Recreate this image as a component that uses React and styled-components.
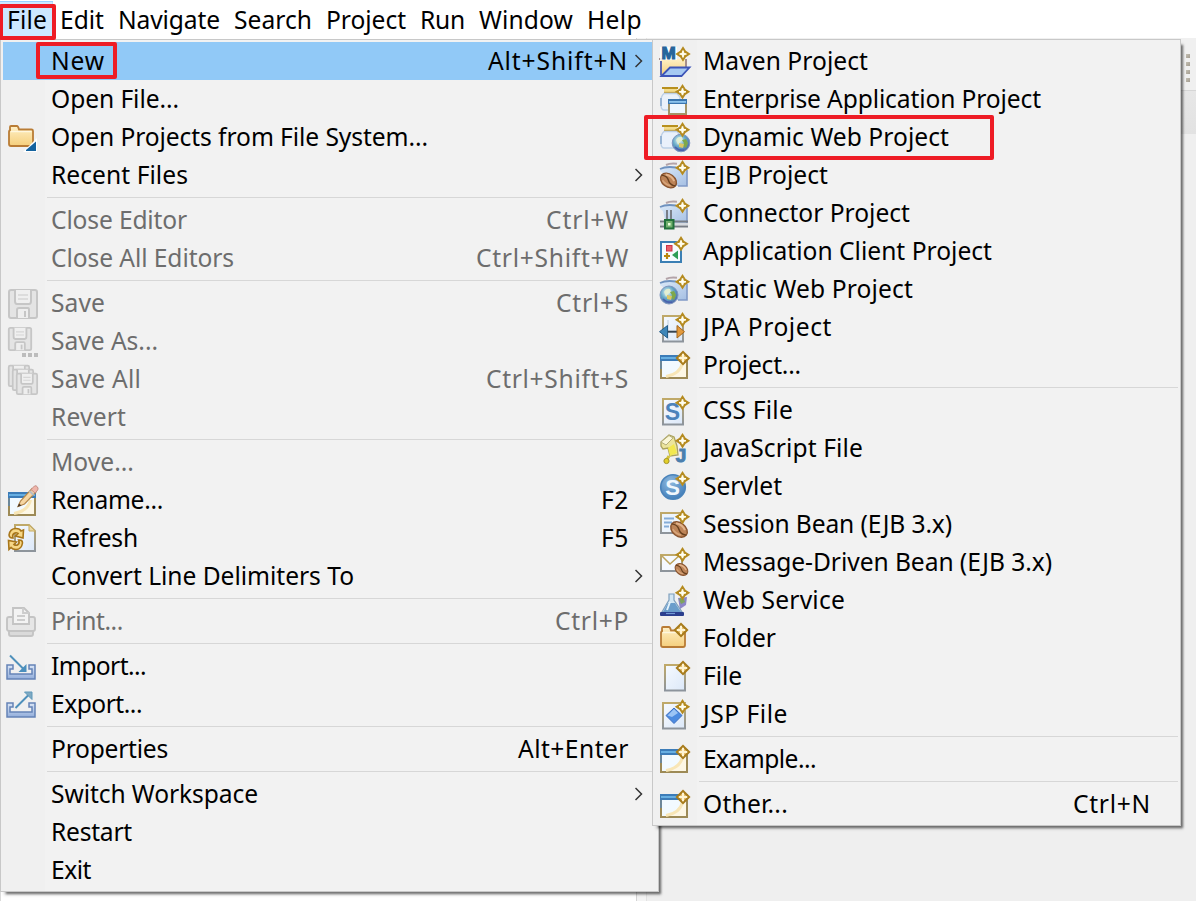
import React, { useLayoutEffect, useRef } from "react";
import styled, { createGlobalStyle, css } from "styled-components";

const GlobalStyle = createGlobalStyle`
  * { box-sizing: border-box; }
  body {
    margin: 0;
    background: #f0f0f0;
    overflow: hidden;
    font-family: "Noto Sans", "Open Sans", sans-serif;
    font-size: 24.6px;
    color: #000;
  }
`;

/* ---------- window ---------- */

const Screen = styled.div`
  position: relative;
  display: flex;
  flex-direction: column;
  width: 1196px;
  height: 901px;
  overflow: hidden;
  background: #f0f0f0;
`;

const MenuBar = styled.nav`
  display: flex;
  flex: 0 0 38px;
  align-items: stretch;
  background: #fff;
`;

const BarItem = styled.div`
  position: relative;
  display: flex;
  align-items: center;
  height: 37px;
  margin-top: 1px;
  padding: 0 7px;
  ${(p) =>
    p.$open &&
    css`
      padding-right: 6px;
      background: #cce8ff;
      box-shadow: inset 0 1px 0 #99d1ff, inset -1px 0 0 #b5dcfb;
    `}
`;

const Workbench = styled.main`
  display: flex;
  flex: 1;
  min-height: 0;
`;

const EditorPane = styled.section`
  width: 637px;
  border-left: 1px solid #dadada;
  border-right: 1px solid #d4d4d4;
  background: #fff;
`;

const Sash = styled.div`
  width: 10px;
  border-right: 1px solid #e2e2e2;
  background: #f4f4f4;
`;

const SidePane = styled.section`
  display: flex;
  flex: 1;
  flex-direction: column;
  background: #efefef;
`;

const ToolStrip = styled.div`
  display: flex;
  flex-direction: column;
  align-items: flex-end;
  gap: 4px;
  height: 53px;
  padding: 16px 6px 0 0;
  border-bottom: 1px solid #d6d6d6;
  background: #f0f0f0;
`;

const Grip = styled.i`
  width: 4px;
  height: 4px;
  background: linear-gradient(135deg, #c4c0b4, #a39c90);
`;

const TabStrip = styled.div`
  height: 43px;
  background: linear-gradient(#e7e7e7, #e2e2e2);
`;

/* ---------- menus ---------- */

const Menu = styled.div`
  position: absolute;
  top: 39px;
  left: ${(p) => p.$left}px;
  width: ${(p) => p.$width}px;
  padding: 2px;
  border: 1px solid #c8c8c8;
  background: linear-gradient(90deg, #f0f0f0 44px, #f2f2f2 44px);
  box-shadow: 4px 4px 2px -2px rgba(0, 0, 0, 0.45), 3px 4px 3px -1px rgba(0, 0, 0, 0.18);
`;

const Row = styled.div`
  position: relative;
  display: flex;
  align-items: center;
  height: 38px;
  color: ${(p) => (p.$disabled ? "#6d6d6d" : "#000")};
  background: ${(p) => (p.$active ? "#91c9f7" : "transparent")};
`;

const IconCell = styled.span`
  display: flex;
  flex: 0 0 48px;
  padding-left: 3px;
  height: 32px;
`;

const Trailing = styled.span`
  display: flex;
  align-items: center;
  justify-content: flex-end;
  margin-left: auto;
  padding-right: ${(p) => (p.$arrow ? 13 : 27)}px;
`;

const Shortcut = styled.span`
  display: flex;
  margin-right: ${(p) => (p.$arrow ? 7 : 0)}px;
`;

const Separator = styled.hr`
  height: 1px;
  margin: 3px 0 3px 44px;
  border: 0;
  background: #d7d7d7;
`;

const Marker = styled.span`
  position: absolute;
  z-index: 2;
  top: ${(p) => p.$top}px;
  left: ${(p) => p.$left}px;
  width: ${(p) => p.$w}px;
  height: ${(p) => p.$h}px;
  border: 4px solid #ee1c25;
  border-radius: 2px;
  pointer-events: none;
`;

const TextBox = styled.span`
  display: inline-block;
  width: ${(p) => p.$w}px;
  line-height: 36px;
  white-space: pre;
`;

function Caption({ w, children }) {
  const ref = useRef(null);
  useLayoutEffect(() => {
    const el = ref.current;
    el.style.letterSpacing = "0px";
    const natural = el.getBoundingClientRect().width;
    el.style.letterSpacing = `${(w - natural) / children.length}px`;
  }, [w, children]);
  return (
    <TextBox $w={w}>
      <span ref={ref}>{children}</span>
    </TextBox>
  );
}

const Svg = styled.svg`
  display: block;
  width: 32px;
  height: 32px;
  overflow: visible;
`;

/* ---------- icon parts ---------- */

const Gradients = () => (
  <svg width="0" height="0" style={{ position: "absolute" }}>
    <defs>
      <linearGradient id="folder" x1="0" y1="0" x2="0" y2="1">
        <stop offset="0" stopColor="#fff0c6" />
        <stop offset="1" stopColor="#f5cf7c" />
      </linearGradient>
      <linearGradient id="edge" x1="0" y1="0" x2="0" y2="1">
        <stop offset="0" stopColor="#c0a968" />
        <stop offset="1" stopColor="#8d949c" />
      </linearGradient>
      <linearGradient id="paper" x1="0" y1="0" x2="1" y2="1">
        <stop offset="0" stopColor="#f6faff" />
        <stop offset="1" stopColor="#dce8f8" />
      </linearGradient>
      <linearGradient id="blueBox" x1="0" y1="0" x2="1" y2="1">
        <stop offset="0" stopColor="#dbe9f8" />
        <stop offset="1" stopColor="#a5bfe3" />
      </linearGradient>
      <radialGradient id="globe" cx="0.4" cy="0.35" r="0.7">
        <stop offset="0" stopColor="#eaf7fb" />
        <stop offset="0.5" stopColor="#66a9c6" />
        <stop offset="1" stopColor="#4a62a4" />
      </radialGradient>
      <radialGradient id="disc" cx="0.4" cy="0.3" r="0.8">
        <stop offset="0" stopColor="#8fb9de" />
        <stop offset="1" stopColor="#3a78b6" />
      </radialGradient>
      <linearGradient id="tray" x1="0" y1="0" x2="0" y2="1">
        <stop offset="0" stopColor="#dbe6f6" />
        <stop offset="1" stopColor="#93aedb" />
      </linearGradient>
    </defs>
  </svg>
);

const Sparkle = ({ x = 24.5, y = 8.8 }) => (
  <g transform={`translate(${x} ${y})`}>
    <path d="M0-7 3-3 7 0 3 3 0 7-3 3-7 0-3-3Z" fill="#f2e6b8" />
    <path d="M0-5.600 2.200-2.200 5.600 0 2.200 2.200 0 5.600-2.200 2.200-5.600 0-2.200-2.200Z" fill="#fdf3c4" stroke="#b48a20" strokeWidth="2.300" />
    <path d="M0-3.500V3.500M-3.500 0H3.500" stroke="#fffdf0" strokeWidth="1.600" />
  </g>
);

const Badge = ({ x = 25, y = 9 }) => (
  <g transform={`translate(${x} ${y})`}>
    <path d="M0-6 6 0 0 6-6 0Z" fill="#e8c170" stroke="#a87c1c" strokeWidth="2.200" />
    <path d="M0-4.200V4.200M-4.200 0H4.200" stroke="#fff4d2" strokeWidth="2" />
  </g>
);

const Globe = ({ x, y, r = 8.6 }) => (
  <g transform={`translate(${x} ${y})`}>
    <circle r={r} fill="url(#globe)" stroke="#7f95bf" strokeWidth="1" />
    <path d="M-5-3Q-3-7 1-6L2-3-1-1-3 2Z" fill="#e4f0cf" opacity=".9" />
    <path d="M1-3 5-4 7 0 5 5 2 3 3 0Z" fill="#7fa84a" />
    <path d="M-2 0 3 1 2 5-2 4Z" fill="#dcc766" />
    <path d="M-6 4Q-2 8 3 7" fill="none" stroke="#4a5fae" strokeWidth="1.400" />
  </g>
);

const Bean = ({ x, y, s = 1 }) => (
  <g transform={`translate(${x} ${y}) rotate(38) scale(${s})`}>
    <ellipse rx="9" ry="6.500" fill="#bd8458" stroke="#8a5530" strokeWidth="1.400" />
    <path d="M-6-3Q0-6 5-3" fill="none" stroke="#e2b38b" strokeWidth="2" />
    <path d="M-9 0Q-4-3 0 0T9 0" fill="none" stroke="#68401f" strokeWidth="1.400" />
    <path d="M-5 3.600Q0 5.400 5 3" fill="none" stroke="#d7a479" strokeWidth="1.600" />
  </g>
);

const BlueFolder = () => (
  <g>
    <path d="M8 6Q12 4 19 4.800" fill="none" stroke="#b3a3a8" strokeWidth="2" />
    <path d="M2 9.500 8 8H26L29 11V27H8L5 14 2 12Z" fill="url(#blueBox)" />
    <path d="M2 10Q8 7 18 8.500" fill="none" stroke="#6f92bf" strokeWidth="1.800" />
    <path d="M29 11V27H20" fill="none" stroke="#8099c6" strokeWidth="1.600" />
  </g>
);

const Jar = () => (
  <g>
    <rect x="4" y="4" width="16" height="2" fill="#b8901e" />
    <rect x="6" y="6" width="13" height="3" fill="#f3dc8c" />
    <path d="M6 9.500H18" stroke="#c19b37" strokeWidth="1.400" />
    <path d="M6 10.500H19L22 14V27H6Q2.600 27 3 20 2.600 13 6 10.500Z" fill="#eaf1fb" stroke="#bccfe6" strokeWidth="1.400" />
    <path d="M3 15V23" stroke="#92b0d2" strokeWidth="1.800" />
  </g>
);

const Page = ({ x = 4, y = 4.5, w = 22, h = 27 }) => (
  <rect x={x + 1} y={y + 0.5} width={w - 2} height={h - 1.5} fill="url(#paper)" stroke="url(#edge)" strokeWidth="2" />
);

const Letter = styled.text`
  font-family: "Liberation Sans", sans-serif;
  font-weight: 700;
  text-anchor: middle;
`;

const WindowFrame = ({ y = 6 }) => (
  <g>
    <rect x="3" y={y + 1} width="26" height="22" fill="#f2faff" stroke="#9d8a56" strokeWidth="2" />
    <path d={`M8 ${y + 22}Q23 ${y + 20} 25 ${y + 8}H28V${y + 22}Z`} fill="#fff6de" opacity=".8" />
    <path d={`M8 ${y + 21.5}Q22 ${y + 19} 24.500 ${y + 8}`} stroke="#f8e6b6" strokeWidth="3" fill="none" />
    <rect x="2" y={y} width="28" height="6" fill="#3c7cb8" />
    <rect x="3" y={y + 2} width="26" height="2" fill="#67afe2" />
    <path d={`M3 ${y + 6}V${y + 14}`} stroke="#6c8799" strokeWidth="2" />
  </g>
);

const FolderShape = () => (
  <g>
    <path d="M4 9V6Q4 5 5 5H11Q12 5 13 8.500H25.500Q27 8.500 27 10V23Q27 25 25 25H5Q3 25 3 23V11Q3 9 5 9Z" fill="url(#folder)" stroke="#b97c35" strokeWidth="1.800" />
    <path d="M4.500 10.500H25.500" stroke="#fff7df" strokeWidth="1.400" />
  </g>
);

const Floppy = ({ s = 1, x = 0, y = 0 }) => (
  <g transform={`translate(${x} ${y}) scale(${s})`} stroke="#c6c6c6" strokeWidth={2 / (0.4 + s * 0.6)} fill="#e4e4e4">
    <rect x="1" y="1" width="28" height="28" rx="2" />
    <path d="M7 1V12Q7 15 9 15H21Q23 15 23 12V1" fill="#efefef" />
    <path d="M10 6H20M10 10H20" stroke="#d6d6d6" strokeWidth="1.500" fill="none" />
    <path d="M9 29V21Q9 19 11 19H20Q21 19 21 21V29" fill="#eee" />
    <path d="M17 22V28" />
  </g>
);

/* ---------- icons ---------- */

const icons = {
  openProject: (
    <>
      <FolderShape />
      <path d="M31 17V31H17Z" fill="#fff" />
      <path d="M30 20.500V30H20V29Z" fill="#15639f" />
    </>
  ),
  save: <Floppy x={2} y={2} />,
  saveAs: (
    <>
      <Floppy x={2} y={2} s={0.8} />
      <path d="M16 28h4v4h-4ZM22 28h4v4h-4ZM28 28h4v4h-4Z" fill="#bcbcbc" />
    </>
  ),
  saveAll: (
    <>
      <Floppy x={2} y={2} s={0.73} />
      <Floppy x={6} y={6} s={0.73} />
      <Floppy x={10} y={10} s={0.73} />
    </>
  ),
  rename: (
    <>
      <WindowFrame y={8} />
      <path d="M12 22.500 14.500 17 26 4.500 30 8 18.500 20Z" fill="#f6d6a2" stroke="#b5874a" strokeWidth="1.200" />
      <path d="M25 5.500 28.500 2Q30 1 31.500 3T31 7L29 9Z" fill="#efb5aa" stroke="#c58f86" strokeWidth="1" />
      <path d="M23.500 7 27.500 11" stroke="#b9bcc4" strokeWidth="2" />
      <path d="M11.500 23 13 19.500 15.500 21.500Z" fill="#4b3a28" />
    </>
  ),
  refresh: (
    <>
      <path d="M9 3H23L29 9V29H9Z" fill="url(#paper)" stroke="url(#edge)" strokeWidth="2" />
      <path d="M23 3V9H29Z" fill="#ead8a2" stroke="#c9ad62" strokeWidth="1" />
      <path d="M3 13Q4 6.500 10 6.500 14 6.500 15 9L17.500 8 17 16 9.500 14 12 11.500Q10 10 8 11.500T7 16Q3.500 16.500 3 13Z" fill="#f6d787" stroke="#a8761a" strokeWidth="1.600" />
      <path d="M16.500 21Q15.500 27.500 10 27.500 6.500 27.500 5 25.500L3 27.500 2.500 18.500 10.500 20 8 22.500Q10 24 12 22.500T12.500 18Q16.500 17.500 16.500 21Z" fill="#f6d787" stroke="#a8761a" strokeWidth="1.600" />
    </>
  ),
  print: (
    <g stroke="#c4c4c4" strokeWidth="1.900" fill="#e6e6e6">
      <rect x="3" y="24" width="24" height="7" rx="2" fill="#dadada" />
      <rect x="1" y="12" width="28" height="14" rx="2" />
      <path d="M7 19V3H18L23 8V19Z" fill="#f3f3f3" />
      <path d="M17 3V8H23M11 11H19M11 15H19" fill="none" stroke="#cdcdcd" />
    </g>
  ),
  import: (
    <>
      <path d="M1 15V29H29V15H23V19H26V24H4V19H7V15Z" fill="url(#tray)" stroke="#6482b6" strokeWidth="1.500" />
      <path d="M4 5.500 18 19.500" stroke="#4f90bb" strokeWidth="2" />
      <path d="M20.500 14V22H12.500Z" fill="#4b8fbd" />
    </>
  ),
  export: (
    <>
      <path d="M1 15V29H29V15H23V19H26V24H4V19H7V15Z" fill="url(#tray)" stroke="#6482b6" strokeWidth="1.500" />
      <path d="M9.500 20 23 6.500" stroke="#4f90bb" strokeWidth="2" />
      <path d="M26 4V11.500L18.500 4Z" fill="#7fa9c2" stroke="#5f99bb" strokeWidth="1" />
    </>
  ),
  maven: (
    <>
      <path d="M3 14H29V23L24 30H3Z" fill="url(#folder)" />
      <path d="M1 14H5M28 14V22" stroke="#a58f8c" strokeWidth="2" />
      <path d="M3 16V30.500" stroke="#5b66b0" strokeWidth="2" />
      <path d="M3.500 31 12 22.500H31.500L23.500 31Z" fill="#a6c9f2" stroke="#3d55b8" strokeWidth="1.800" />
      <rect x="2" y="2" width="17" height="13" fill="#fff" opacity=".85" />
      <Letter x="10.700" y="14" fontSize="17" fill="#27659b" stroke="#27659b" strokeWidth="1.200">M</Letter>
      <Sparkle x={25} y={9} />
    </>
  ),
  enterprise: (
    <>
      <Jar />
      <rect x="11" y="17" width="17" height="14" fill="#eef7ff" stroke="#a39468" strokeWidth="2" />
      <rect x="10" y="16" width="19" height="5" fill="#3a76b0" />
      <rect x="11" y="18" width="17" height="1.800" fill="#8cc4ee" />
      <Sparkle />
    </>
  ),
  dynamicWeb: (
    <>
      <Jar />
      <Globe x={23} y={22} r={8.8} />
      <Sparkle />
    </>
  ),
  ejb: (
    <>
      <BlueFolder />
      <Bean x={10.5} y={21.5} s={0.98} />
      <Sparkle />
    </>
  ),
  connector: (
    <>
      <BlueFolder />
      <path d="M2 24.500H30M2 29.500H30" stroke="#777c84" strokeWidth="2" />
      <path d="M2 27H30" stroke="#d6dae0" strokeWidth="2" />
      <path d="M9 13V24M13 13V24" stroke="#7a7f88" strokeWidth="2" />
      <rect x="7" y="23" width="8.500" height="8.500" fill="#72b06e" stroke="#21703a" strokeWidth="2" />
      <rect x="10" y="26" width="2.500" height="2.500" fill="#eaffdc" />
      <Sparkle />
    </>
  ),
  appClient: (
    <>
      <rect x="3" y="7" width="20" height="20" fill="#f7fbff" stroke="#3b7fb4" strokeWidth="2" />
      <rect x="8.500" y="10.500" width="5.500" height="5.500" fill="#e9626b" stroke="#cc3347" strokeWidth="1" />
      <path d="M20 15.500V24.500L14 20Z" fill="#2f9e57" />
      <path d="M9 18V24M6 21H12" stroke="#b9860e" strokeWidth="2.200" />
      <Sparkle x={23} />
    </>
  ),
  staticWeb: (
    <>
      <BlueFolder />
      <Globe x={11} y={22} r={9} />
      <Sparkle />
    </>
  ),
  jpa: (
    <>
      <Page />
      <path d="M10 9V29M20 14V29" stroke="#cfdbe8" strokeWidth="1.500" />
      <path d="M9 20.700H20" stroke="#34434f" strokeWidth="2" />
      <path d="M1.500 20.700 9.500 14.500V27Z" fill="#3d86b8" stroke="#235d8a" strokeWidth="1" />
      <path d="M26.500 20.700 19 14.500V27Z" fill="#e39a3d" stroke="#a5671b" strokeWidth="1" />
      <Sparkle />
    </>
  ),
  wizard: (
    <>
      <WindowFrame />
      <Badge />
    </>
  ),
  css: (
    <>
      <Page />
      <Letter x="14.500" y="26" fontSize="23" fill="#4c83bb">S</Letter>
      <Sparkle />
    </>
  ),
  js: (
    <>
      <path d="M3 10 11 3 16 5 19 14 20 23 12 24 10 16 5 17 3 14Z" fill="#ece59c" stroke="#aaa25c" strokeWidth="1.300" />
      <path d="M3 10 11 3.500 15 6 8 13Z" fill="#faf7d8" stroke="#b4ad79" strokeWidth="1" />
      <path d="M10 16 16 12 19 21 12 24Z" fill="#f2e84f" />
      <path d="M11 24 8 29" stroke="#d3c23a" strokeWidth="3" />
      <circle cx="8.500" cy="29" r="2.600" fill="#e3cf29" stroke="#a1942e" />
      <Letter x="23" y="29.500" fontSize="19" fill="#4b7fae" stroke="#4b7fae">J</Letter>
      <Sparkle />
    </>
  ),
  servlet: (
    <>
      <circle cx="15" cy="17" r="12.300" fill="url(#disc)" stroke="#4a83ba" strokeWidth="1.600" />
      <Letter x="14.500" y="25" fontSize="22" fill="#f1f7fd">S</Letter>
      <Sparkle />
    </>
  ),
  sessionBean: (
    <>
      <rect x="3" y="5" width="20" height="20" fill="#edf5fd" stroke="url(#edge)" strokeWidth="2" />
      <path d="M6 10.500H16M6 14.500H14M6 18.500H11" stroke="#85add8" strokeWidth="1.800" />
      <Bean x={21} y={21.5} s={1.02} />
      <Sparkle />
    </>
  ),
  messageBean: (
    <>
      <rect x="3" y="9" width="21" height="16" fill="#f5f9ff" stroke="url(#edge)" strokeWidth="2" />
      <path d="M3 9 12 18 22 9" fill="none" stroke="#bda45e" strokeWidth="1.500" />
      <Bean x={23.5} y={23.5} s={0.78} />
      <Sparkle />
    </>
  ),
  webService: (
    <>
      <path d="M20 14 29 13 28 21 22 25Z" fill="#8d86c7" />
      <path d="M21 15 25 13 27 18 23 20Z" fill="#7ea45e" />
      <path d="M11 10H16V16L24 28H4L11 16Z" fill="#d2e6f3" stroke="#7f9fbd" strokeWidth="1.200" />
      <path d="M10 19H17L23 28H5Z" fill="#6a9dcb" />
      <path d="M9 26 12 18" stroke="#e4f2fb" strokeWidth="2" />
      <rect x="2" y="28" width="24" height="4" rx="1" fill="#2b3f8e" />
      <path d="M8 29.500H17" stroke="#7199d4" strokeWidth="1.200" />
      <Sparkle />
    </>
  ),
  folder: (
    <>
      <FolderShape />
      <Badge x={23} y={8} />
    </>
  ),
  file: (
    <>
      <Page x={6} />
      <Badge x={25} y={8} />
    </>
  ),
  jsp: (
    <>
      <Page w={24} />
      <path d="M16 10 24 17.500 16 25.500 8 17.500Z" fill="#4d8be0" stroke="#3c6fc1" strokeWidth="1" />
      <path d="M16 11 20 15 14 19 9.500 17.500Z" fill="#9cc4f5" />
      <Sparkle />
    </>
  ),
};

/* ---------- data: [caption, caption width, options] ---------- */

const bar = [
  ["File", 40],
  ["Edit", 44],
  ["Navigate", 102],
  ["Search", 78],
  ["Project", 80],
  ["Run", 45],
  ["Window", 94],
  ["Help", 55],
];

const fileMenu = [
  ["New", 54, { keys: "Alt+Shift+N", keysWidth: 140, arrow: true, active: true, marker: [32.5, 0, 81, 37] }],
  ["Open File...", 128],
  ["Open Projects from File System...", 377, { icon: "openProject" }],
  ["Recent Files", 137, { arrow: true }],
  null,
  ["Close Editor", 136, { disabled: true, keys: "Ctrl+W", keysWidth: 83 }],
  ["Close All Editors", 183, { disabled: true, keys: "Ctrl+Shift+W", keysWidth: 153 }],
  null,
  ["Save", 54, { disabled: true, icon: "save", keys: "Ctrl+S", keysWidth: 73 }],
  ["Save As...", 107, { disabled: true, icon: "saveAs" }],
  ["Save All", 90, { disabled: true, icon: "saveAll", keys: "Ctrl+Shift+S", keysWidth: 143 }],
  ["Revert", 75, { disabled: true }],
  null,
  ["Move...", 83, { disabled: true }],
  ["Rename...", 112, { icon: "rename", keys: "F2", keysWidth: 28 }],
  ["Refresh", 87, { icon: "refresh", keys: "F5", keysWidth: 28 }],
  ["Convert Line Delimiters To", 303, { arrow: true }],
  null,
  ["Print...", 72, { disabled: true, icon: "print", keys: "Ctrl+P", keysWidth: 74 }],
  null,
  ["Import...", 95, { icon: "import" }],
  ["Export...", 91, { icon: "export" }],
  null,
  ["Properties", 117, { keys: "Alt+Enter", keysWidth: 111 }],
  null,
  ["Switch Workspace", 207, { arrow: true }],
  ["Restart", 81],
  ["Exit", 40],
];

const newMenu = [
  ["Maven Project", 165, { icon: "maven" }],
  ["Enterprise Application Project", 338, { icon: "enterprise" }],
  ["Dynamic Web Project", 246, { icon: "dynamicWeb", marker: [-11, -3, 350, 45] }],
  ["EJB Project", 125, { icon: "ejb" }],
  ["Connector Project", 207, { icon: "connector" }],
  ["Application Client Project", 289, { icon: "appClient" }],
  ["Static Web Project", 210, { icon: "staticWeb" }],
  ["JPA Project", 129, { icon: "jpa" }],
  ["Project...", 98, { icon: "wizard" }],
  null,
  ["CSS File", 90, { icon: "css" }],
  ["JavaScript File", 160, { icon: "js" }],
  ["Servlet", 79, { icon: "servlet" }],
  ["Session Bean (EJB 3.x)", 249, { icon: "sessionBean" }],
  ["Message-Driven Bean (EJB 3.x)", 349, { icon: "messageBean" }],
  ["Web Service", 142, { icon: "webService" }],
  ["Folder", 73, { icon: "folder" }],
  ["File", 39, { icon: "file" }],
  ["JSP File", 85, { icon: "jsp" }],
  null,
  ["Example...", 113, { icon: "wizard" }],
  null,
  ["Other...", 85, { icon: "wizard", keys: "Ctrl+N", keysWidth: 78 }],
];

function MenuList({ items, left, width }) {
  return (
    <Menu $left={left} $width={width}>
      {items.map((item, i) => {
        if (!item) return <Separator key={i} />;
        const [label, w, o = {}] = item;
        return (
          <Row key={label} $disabled={o.disabled} $active={o.active}>
            <IconCell>{o.icon && <Svg viewBox="0 0 32 32">{icons[o.icon]}</Svg>}</IconCell>
            <Caption w={w}>{label}</Caption>
            {(o.keys || o.arrow) && (
              <Trailing $arrow={o.arrow}>
                {o.keys && (
                  <Shortcut $arrow={o.arrow}>
                    <Caption w={o.keysWidth}>{o.keys}</Caption>
                  </Shortcut>
                )}
                {o.arrow && (
                  <svg width="8" height="14" viewBox="0 0 8 14" fill="none" stroke="#333" strokeWidth="1.500">
                    <path d="M0.500 1 6.500 7 0.500 13" />
                  </svg>
                )}
              </Trailing>
            )}
            {o.marker && <Marker $left={o.marker[0]} $top={o.marker[1]} $w={o.marker[2]} $h={o.marker[3]} />}
          </Row>
        );
      })}
    </Menu>
  );
}

export default function App() {
  return (
    <Screen>
      <GlobalStyle />
      <Gradients />
      <MenuBar>
        {bar.map(([label, w], i) => (
          <BarItem key={label} $open={i === 0}>
            <Caption w={w}>{label}</Caption>
            {i === 0 && <Marker $left={-1} $top={3} $w={57} $h={36} />}
          </BarItem>
        ))}
      </MenuBar>
      <Workbench>
        <EditorPane />
        <Sash />
        <SidePane>
          <ToolStrip>
            <Grip />
            <Grip />
            <Grip />
            <Grip />
          </ToolStrip>
          <TabStrip />
        </SidePane>
      </Workbench>
      <MenuList items={fileMenu} left={0} width={659} />
      <MenuList items={newMenu} left={652} width={529} />
    </Screen>
  );
}
